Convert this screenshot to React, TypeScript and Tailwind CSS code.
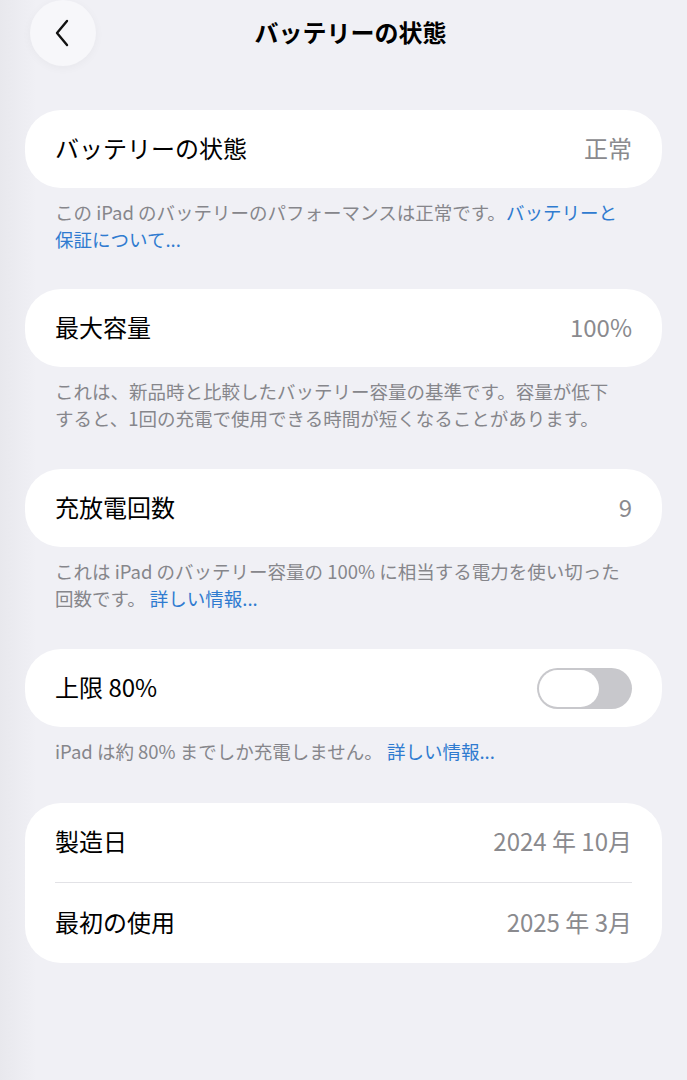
import React from 'react';

const font = { fontFamily: '"Noto Sans CJK JP", "Noto Sans", sans-serif' };

const Row = ({ label, value }: { label: string; value?: React.ReactNode }) => (
  <div className="flex h-[78px] items-center justify-between px-[30px] pb-[3px]">
    <span className="text-[24px] leading-[30px] text-black">{label}</span>
    {value}
  </div>
);

const Note = ({ children }: { children: React.ReactNode }) => (
  <p className="mt-[11px] px-[30px] text-[18.5px] leading-[27px] text-[#86868b] whitespace-nowrap">{children}</p>
);

const Link = ({ children }: { children: React.ReactNode }) => (
  <span className="text-[#2f7bd0]">{children}</span>
);

const Value = ({ children }: { children: React.ReactNode }) => (
  <span className="text-[24px] leading-[30px] text-[#8a8a8e]">{children}</span>
);

const Toggle = () => (
  <div className="mt-[3px] flex h-[41px] w-[95px] items-center rounded-full bg-[#c8c8cc] p-[2px]">
    <div className="h-[37px] w-[60px] rounded-full bg-white" />
  </div>
);

export default function App() {
  return (
    <div
      className="min-h-screen w-full bg-[linear-gradient(to_right,#e8e8ed_0px,#f0f0f5_36px)]"
      style={font}
    >
      <div className="relative flex h-[66px] items-center justify-center">
        <button className="absolute left-[30px] top-0 flex h-[66px] w-[66px] items-center justify-center rounded-full bg-[#f7f7fa] shadow-[0_2px_10px_rgba(0,0,0,0.04)]">
          <svg width="22" height="30" viewBox="0 0 22 30" fill="none">
            <path d="M15 3 L5 15 L15 27" stroke="#111" strokeWidth="2.4" strokeLinecap="round" strokeLinejoin="round" />
          </svg>
        </button>
        <h1 className="pb-[3px] pl-[14px] text-[24px] font-bold text-black">バッテリーの状態</h1>
      </div>

      <div className="flex flex-col px-[25px] pt-[44px]">
        <section className="mb-[36px]">
          <div className="rounded-[36px] bg-white">
            <Row label="バッテリーの状態" value={<Value>正常</Value>} />
          </div>
          <Note>
            この iPad のバッテリーのパフォーマンスは正常です。<Link>バッテリーと</Link>
            <br />
            <Link>保証について...</Link>
          </Note>
        </section>

        <section className="mb-[37px]">
          <div className="rounded-[36px] bg-white">
            <Row label="最大容量" value={<Value>100%</Value>} />
          </div>
          <Note>
            これは、新品時と比較したバッテリー容量の基準です。容量が低下
            <br />
            すると、1回の充電で使用できる時間が短くなることがあります。
          </Note>
        </section>

        <section className="mb-[37px]">
          <div className="rounded-[36px] bg-white">
            <Row label="充放電回数" value={<Value>9</Value>} />
          </div>
          <Note>
            これは iPad のバッテリー容量の 100% に相当する電力を使い切った
            <br />
            回数です。 <Link>詳しい情報...</Link>
          </Note>
        </section>

        <section className="mb-[38px]">
          <div className="rounded-[36px] bg-white">
            <Row label="上限 80%" value={<Toggle />} />
          </div>
          <Note>
            iPad は約 80% までしか充電しません。 <Link>詳しい情報...</Link>
          </Note>
        </section>

        <section>
          <div className="rounded-[36px] bg-white px-[30px]">
            <div className="flex h-[79px] items-center justify-between pb-[3px]">
              <span className="text-[24px] leading-[30px] text-black">製造日</span>
              <Value>2024 年 10月</Value>
            </div>
            <div className="h-px bg-[#e2e2e6]" />
            <div className="flex h-[80px] items-center justify-between pb-[3px]">
              <span className="text-[24px] leading-[30px] text-black">最初の使用</span>
              <Value>2025 年 3月</Value>
            </div>
          </div>
        </section>
      </div>
    </div>
  );
}
